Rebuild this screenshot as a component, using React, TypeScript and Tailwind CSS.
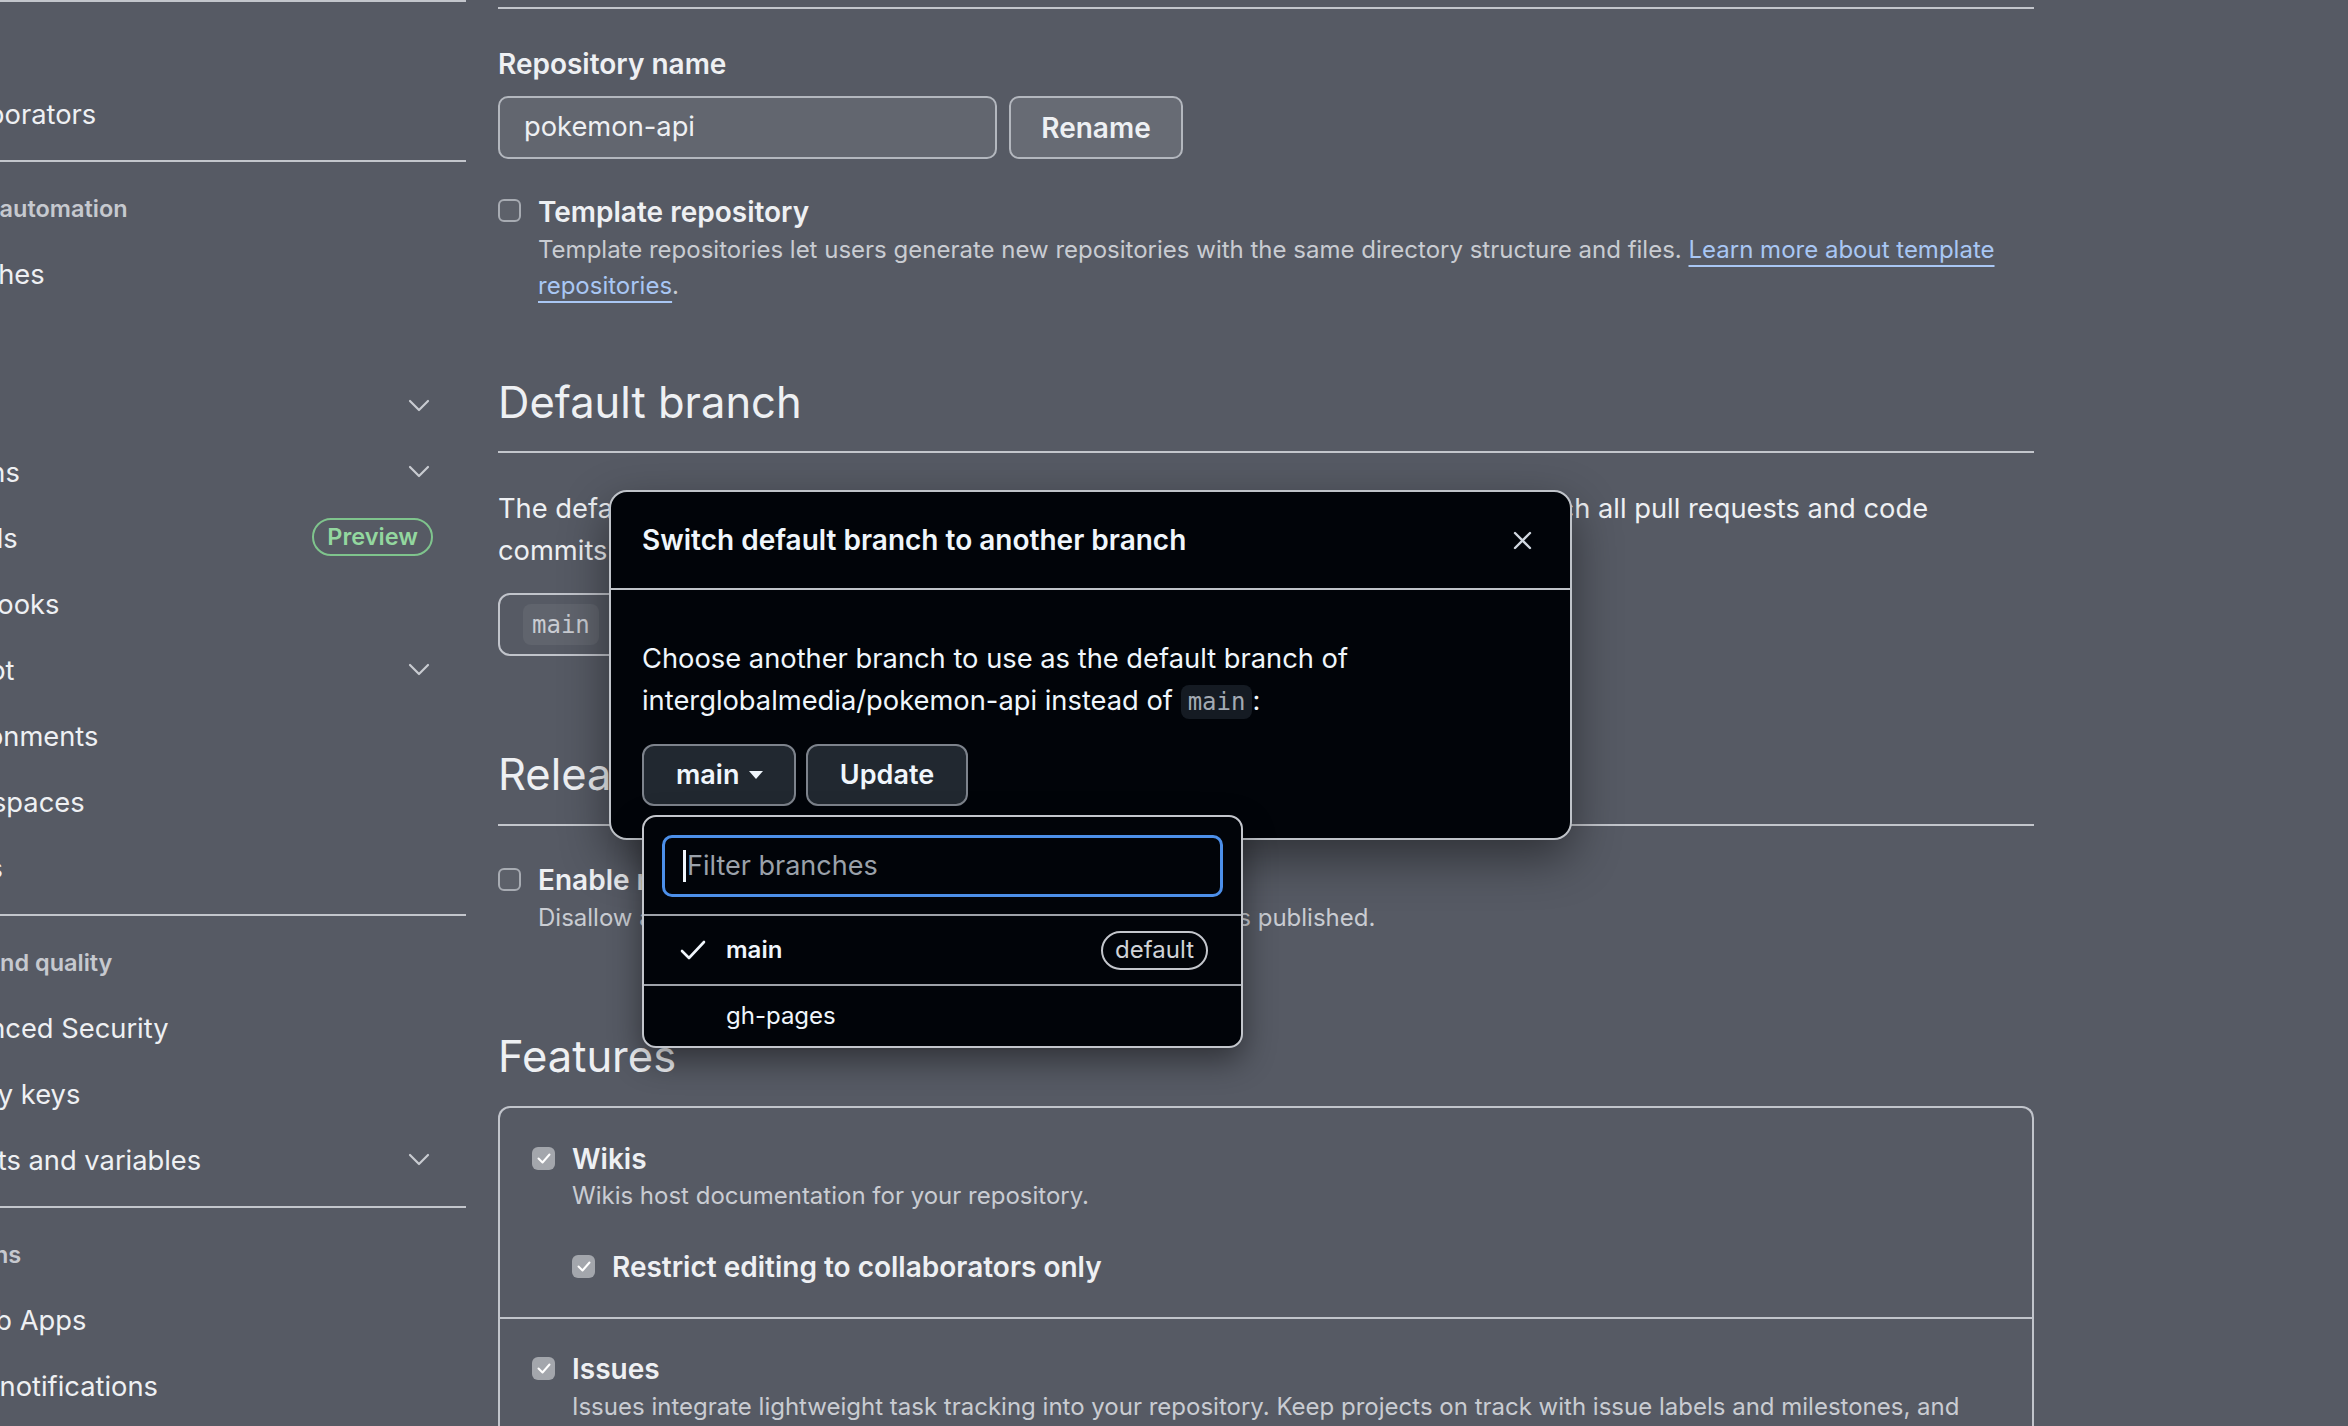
import React from 'react';

type NavEntry = { label: string; chevron?: boolean; badge?: string };
type NavGroup = { title: string; items: NavEntry[] };

const groups: NavGroup[] = [
  { title: 'Access', items: [{ label: 'Collaborators' }] },
  {
    title: 'Code and automation',
    items: [
      { label: 'Branches' },
      { label: 'Tags' },
      { label: 'Rules', chevron: true },
      { label: 'Actions', chevron: true },
      { label: 'Models', badge: 'Preview' },
      { label: 'Webhooks' },
      { label: 'Copilot', chevron: true },
      { label: 'Environments' },
      { label: 'Codespaces' },
      { label: 'Pages' },
    ],
  },
  {
    title: 'Security and quality',
    items: [
      { label: 'Advanced Security' },
      { label: 'Deploy keys' },
      { label: 'Secrets and variables', chevron: true },
    ],
  },
  { title: 'Integrations', items: [{ label: 'GitHub Apps' }, { label: 'Email notifications' }] },
];

const Chevron: React.FC = () => (
  <svg width="22" height="13" viewBox="0 0 22 13" fill="none" stroke="#c8cbd1" strokeWidth={2.2} strokeLinecap="round" strokeLinejoin="round" className="mr-[3px] -mt-[4px]">
    <path d="M2 2l9 9 9-9" />
  </svg>
);

const Checkbox: React.FC<{ checked?: boolean }> = ({ checked }) =>
  checked ? (
    <span className="w-[23px] h-[23px] rounded-[6px] bg-[#a3a6ac] flex items-center justify-center shrink-0">
      <svg width="14" height="11" viewBox="0 0 14 11" fill="none" stroke="#ffffff" strokeWidth={2} strokeLinecap="round" strokeLinejoin="round">
        <path d="M1.5 5.5l4 4 7-8" />
      </svg>
    </span>
  ) : (
    <span className="block w-[23px] h-[23px] rounded-[6px] border-2 border-[#a7abb2] bg-[#5d616a] shrink-0" />
  );

const Sidebar: React.FC = () => (
  <aside className="w-[466px] shrink-0 overflow-hidden">
    <div className="ml-[-115px] w-[581px]">
      {groups.map((g, i) => (
        <div key={g.title}>
          <div className={i === 0 ? 'h-[2px] bg-[#c3c6cc]' : 'h-[2px] bg-[#c3c6cc] mt-[12px]'} />
          <div className="pt-[29px] pb-[15px] text-[23.5px] leading-[36px] font-semibold text-[#c6c9cf] whitespace-nowrap">
            {g.title}
          </div>
          {g.items.map((item) => (
            <div key={item.label} className="h-[66px] flex items-center justify-between pl-[38px] pr-[33px]">
              <span className="text-[27.3px] text-[#eef0f3] whitespace-nowrap">{item.label}</span>
              {item.chevron && <Chevron />}
              {item.badge && (
                <span className="h-[38px] px-[13px] -mt-[4px] rounded-full border-2 border-[#7fc48d] text-[#93d79f] text-[23.5px] font-semibold flex items-center">
                  {item.badge}
                </span>
              )}
            </div>
          ))}
        </div>
      ))}
    </div>
  </aside>
);

const BranchDialog: React.FC = () => (
  <div className="absolute left-[609px] top-[490px] w-[963px] h-[350px] rounded-[18px] border-2 border-[#bfc3c9] bg-[#010409] text-[#f0f6fc] shadow-[0_18px_48px_rgba(0,0,0,0.45)]">
    <div className="h-[98px] border-b-2 border-[#bfc3c9] flex items-center justify-between pl-[31px] pr-[38px]">
      <h2 className="text-[28px] font-semibold">Switch default branch to another branch</h2>
      <svg width="19" height="19" viewBox="0 0 19 19" fill="none" stroke="#d1d7e0" strokeWidth={2.4} strokeLinecap="round">
        <path d="M2 2l15 15M17 2L2 17" />
      </svg>
    </div>
    <div className="pt-[48px] pl-[31px]">
      <p className="text-[27.3px] leading-[42px]">
        Choose another branch to use as the default branch of
        <br />
        interglobalmedia/pokemon-api instead of{' '}
        <code className="font-['DejaVu_Sans_Mono',monospace] text-[24px] text-[#a3aab3] bg-[#151b23] rounded-[8px] px-[7px] py-[3px]">main</code>:
      </p>
      <div className="mt-[21px] flex gap-[10px]">
        <button className="w-[154px] h-[62px] rounded-[12px] border-2 border-[#7d838c] bg-[#212830] pl-[32px] flex items-center gap-[10px] text-[27px] font-semibold">
          main
          <svg width="14" height="8" viewBox="0 0 14 8" fill="#f0f6fc">
            <path d="M0 0h14L7 8z" />
          </svg>
        </button>
        <button className="w-[162px] h-[62px] rounded-[12px] border-2 border-[#7d838c] bg-[#212830] text-[27px] font-semibold">
          Update
        </button>
      </div>
    </div>

    <div className="absolute left-[31px] top-[323px] w-[601px] h-[233px] rounded-[14px] border-2 border-[#c3c6cc] bg-[#010409] shadow-[0_12px_32px_rgba(0,0,0,0.45)]">
      <div className="mx-[18px] mt-[18px] h-[62px] rounded-[10px] border-[3px] border-[#4c8fe9] flex items-center pl-[18px] text-[27px]">
        <span className="w-[3px] h-[32px] bg-[#f0f6fc] mr-[1px]" />
        <span className="text-[#9aa1aa]">Filter branches</span>
      </div>
      <div className="mt-[17px] h-[2px] bg-[#9ea2a9]" />
      <div className="h-[68px] flex items-center pl-[36px] pr-[33px]">
        <svg width="26" height="20" viewBox="0 0 26 20" fill="none" stroke="#f0f6fc" strokeWidth={2.6} strokeLinecap="round" strokeLinejoin="round">
          <path d="M2 11l7 7L24 2" />
        </svg>
        <span className="ml-[20px] text-[24px] font-semibold">main</span>
        <span className="ml-auto h-[39px] px-[12px] rounded-full border-2 border-[#c3c6cc] text-[24px] text-[#d0d3d8] flex items-center">
          default
        </span>
      </div>
      <div className="h-[2px] bg-[#9ea2a9]" />
      <div className="h-[60px] flex items-center pl-[82px] text-[24px]">gh-pages</div>
    </div>
  </div>
);

const App: React.FC = () => {
  return (
    <div className="relative w-[2348px] h-[1426px] overflow-hidden bg-[#565a64] text-[#eef0f3] font-[Inter,sans-serif] flex gap-[32px]">
      <Sidebar />

      <main className="w-[1536px] shrink-0">
        <div className="mt-[7px] h-[2px] bg-[#c3c6cc]" />

        {/* Repository name */}
        <div className="mt-[37px] text-[28px] leading-[36px] font-semibold">Repository name</div>
        <div className="mt-[14px] flex gap-[12px]">
          <div className="w-[499px] h-[63px] rounded-[10px] border-2 border-[#b3b7be] bg-[#62666f] flex items-center pl-[24px] text-[27.3px]">
            pokemon-api
          </div>
          <button className="w-[174px] h-[63px] rounded-[10px] border-2 border-[#b3b7be] bg-[#676b74] text-[28px] font-semibold">
            Rename
          </button>
        </div>

        <div className="mt-[35px] flex gap-[17px]">
          <div className="mt-[5px]">
            <Checkbox />
          </div>
          <div>
            <div className="text-[28px] leading-[36px] font-semibold">Template repository</div>
            <p className="mt-[2px] text-[24px] leading-[36px] text-[#c9ccd2]">
              Template repositories let users generate new repositories with the same directory structure and files.{' '}
              <a className="text-[#a9c7f4] underline decoration-2 underline-offset-[7px]">
                Learn more about template
                <br />
                repositories
              </a>
              .
            </p>
          </div>
        </div>

        {/* Default branch */}
        <h2 className="mt-[70px] text-[43.5px] leading-[56px]">Default branch</h2>
        <div className="mt-[21px] h-[2px] bg-[#c3c6cc]" />
        <p className="mt-[35px] text-[27.3px] leading-[42px]">
          The default branch is considered the “base” branch in your repository, against which all pull requests and code
          <br />
          commits are automatically made, unless you specify a different branch.
        </p>
        <div className="mt-[21px] w-[320px] h-[63px] rounded-[12px] border-2 border-[#c1c4cb] flex items-center pl-[23px]">
          <code className="font-['DejaVu_Sans_Mono',monospace] text-[24px] text-[#c9ccd2] bg-[#60646d] rounded-[8px] px-[9px] h-[41px] flex items-center">
            main
          </code>
        </div>

        {/* Releases */}
        <h2 className="mt-[90px] text-[43.5px] leading-[56px]">Releases</h2>
        <div className="mt-[22px] h-[2px] bg-[#c3c6cc]" />
        <div className="mt-[36px] flex gap-[17px]">
          <div className="mt-[6px]">
            <Checkbox />
          </div>
          <div>
            <div className="text-[28px] leading-[36px] font-semibold">Enable release immutability</div>
            <p className="mt-[2px] text-[24px] leading-[36px] text-[#c9ccd2]">
              Disallow assets and tags from being modified once a release is published.
            </p>
          </div>
        </div>

        {/* Features */}
        <h2 className="mt-[92px] text-[43.5px] leading-[56px]">Features</h2>
        <div className="mt-[22px] rounded-t-[12px] border-2 border-b-0 border-[#c1c4cb]">
          <div className="pt-[33px] pb-[32px] pl-[32px] border-b-2 border-[#c1c4cb]">
            <div className="flex gap-[17px]">
              <div className="mt-[6px]">
                <Checkbox checked />
              </div>
              <div>
                <div className="text-[28px] leading-[36px] font-semibold">Wikis</div>
                <p className="mt-[1px] text-[24px] leading-[36px] text-[#c9ccd2]">Wikis host documentation for your repository.</p>
                <div className="mt-[35px] flex gap-[17px]">
                  <div className="mt-[6px]">
                    <Checkbox checked />
                  </div>
                  <div className="text-[28px] leading-[36px] font-semibold">Restrict editing to collaborators only</div>
                </div>
              </div>
            </div>
          </div>
          <div className="pt-[32px] pl-[32px] h-[200px]">
            <div className="flex gap-[17px]">
              <div className="mt-[6px]">
                <Checkbox checked />
              </div>
              <div>
                <div className="text-[28px] leading-[36px] font-semibold">Issues</div>
                <p className="mt-[2px] text-[24px] leading-[36px] text-[#c9ccd2]">
                  Issues integrate lightweight task tracking into your repository. Keep projects on track with issue labels and milestones, and
                  <br />
                  reference them in commit messages.
                </p>
              </div>
            </div>
          </div>
        </div>
      </main>

      <BranchDialog />
    </div>
  );
};

export default App;
